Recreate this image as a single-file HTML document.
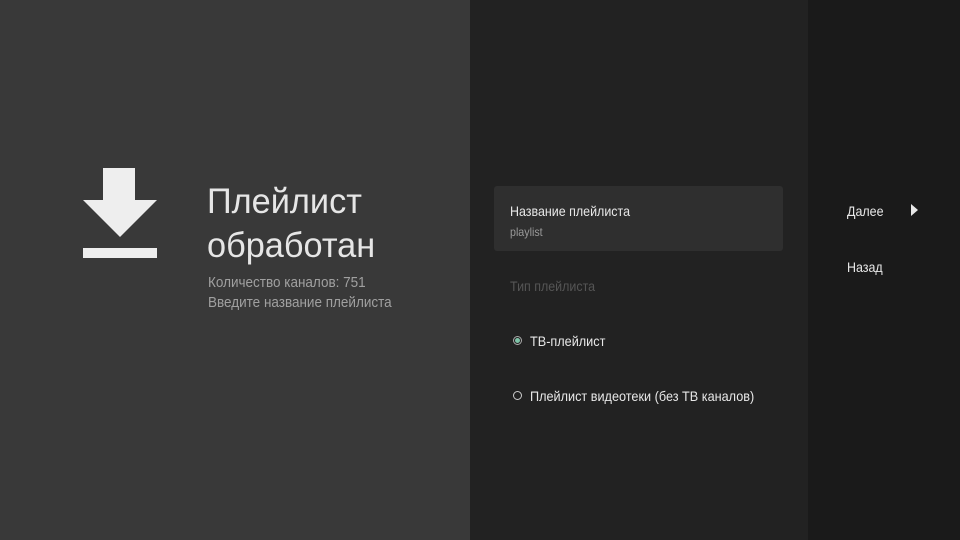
<!DOCTYPE html>
<html><head><meta charset="utf-8"><style>
body{margin:0;width:960px;height:540px;overflow:hidden;font-family:"Liberation Sans",sans-serif;position:relative;background:#1a1a1a}
.p{position:absolute;top:0;height:540px}
.t{position:absolute;white-space:nowrap}
.c{transform-origin:left top;transform:scaleX(0.89)}
</style></head><body>
<div class="p" style="left:0;width:470px;background:#393939"></div>
<div class="p" style="left:470px;width:338px;background:#222222"></div>
<div class="p" style="left:808px;width:152px;background:#1a1a1a"></div>
<svg style="position:absolute;left:0;top:0" width="200" height="270"><path d="M103 168H135V200H157L120 237L83 200H103Z" fill="#eeeeee"/><rect x="83" y="248" width="74" height="10" fill="#eeeeee"/></svg>
<div class="t" style="left:207px;top:180px;font-size:35px;color:#e6e6e6;line-height:44px;font-weight:300;transform-origin:left top;transform:scaleX(0.98)">Плейлист<br>обработан</div>
<div class="t" style="left:208px;top:273px;font-size:15px;color:#a0a0a0;line-height:20px;transform-origin:left top;transform:scaleX(0.9)">Количество каналов: 751<br>Введите название плейлиста</div>
<div style="position:absolute;left:494px;top:186px;width:289px;height:65px;background:#2f2f2f;border-radius:3px"></div>
<div class="t c" style="left:510px;top:203px;font-size:14px;color:#e8e8e8">Название плейлиста</div>
<div class="t c" style="left:510px;top:225px;font-size:12px;color:#9a9a9a">playlist</div>
<div class="t c" style="left:510px;top:278px;font-size:14px;color:#555">Тип плейлиста</div>
<div style="position:absolute;left:513px;top:336px;width:7px;height:7px;border:1px solid #aaa;border-radius:50%"></div>
<div style="position:absolute;left:515px;top:338px;width:5px;height:5px;background:#7fc4a8;border-radius:50%"></div>
<div class="t c" style="left:530px;top:333px;font-size:14px;color:#e8e8e8;transform:scaleX(0.905)">ТВ-плейлист</div>
<div style="position:absolute;left:513px;top:391px;width:7px;height:7px;border:1px solid #ccc;border-radius:50%"></div>
<div class="t c" style="left:530px;top:388px;font-size:14px;color:#e8e8e8;transform:scaleX(0.905)">Плейлист видеотеки (без ТВ каналов)</div>
<div class="t c" style="left:847px;top:203px;font-size:14px;color:#e8e8e8">Далее</div>
<svg style="position:absolute;left:910px;top:204px" width="10" height="12"><path d="M1 0L8 6L1 12Z" fill="#e8e8e8"/></svg>
<div class="t c" style="left:847px;top:259px;font-size:14px;color:#e8e8e8">Назад</div>
</body></html>
